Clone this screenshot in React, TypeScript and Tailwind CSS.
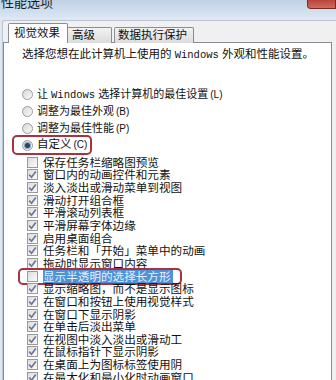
import React from "react";

const FONT = "font-['Liberation_Sans','Noto_Sans_CJK_SC',sans-serif]";

const radios = [
    { label: "让 ", mono: "Windows", rest: " 选择计算机的最佳设置", key: "(L)" },
    { label: "调整为最佳外观", key: "(B)" },
    { label: "调整为最佳性能", key: "(P)" },
];

const effects: { text: string; on: boolean; marked?: boolean }[] = [
    { text: "保存任务栏缩略图预览", on: false },
    { text: "窗口内的动画控件和元素", on: true },
    { text: "淡入淡出或滑动菜单到视图", on: true },
    { text: "滑动打开组合框", on: true },
    { text: "平滑滚动列表框", on: true },
    { text: "平滑屏幕字体边缘", on: true },
    { text: "启用桌面组合", on: true },
    { text: "任务栏和「开始」菜单中的动画", on: true },
    { text: "拖动时显示窗口内容", on: true },
    { text: "显示半透明的选择长方形", on: false, marked: true },
    { text: "显示缩略图，而不是显示图标", on: true },
    { text: "在窗口和按钮上使用视觉样式", on: true },
    { text: "在窗口下显示阴影", on: true },
    { text: "在单击后淡出菜单", on: true },
    { text: "在视图中淡入淡出或滑动工", on: true },
    { text: "在鼠标指针下显示阴影", on: true },
    { text: "在桌面上为图标标签使用阴", on: true },
    { text: "在最大化和最小化时动画窗口", on: true },
];

const Radio: React.FC<{ on?: boolean }> = ({ on }) => (
    <span className="w-[11px] h-[11px] rounded-full border border-[#9a9a9a] bg-gradient-to-br from-[#d8d8d8] to-[#fafafa] flex items-center justify-center shrink-0">
        {on && <span className="w-[5px] h-[5px] rounded-full bg-[#2e4466] ring-1 ring-[#8aa0c4]" />}
    </span>
);

const Check: React.FC<{ on: boolean }> = ({ on }) => (
    <span className="w-[11px] h-[11px] border border-[#9a9a9a] bg-gradient-to-br from-[#dcdcdc] to-[#fbfbfb] flex items-center justify-center shrink-0">
        {on && (
            <svg width="9" height="9" viewBox="0 0 9 9">
                <path d="M1.2 4.6 L3.5 7.2 L7.8 1.4" fill="none" stroke="#6f7596" strokeWidth="1.7" />
            </svg>
        )}
    </span>
);

export default function App() {
    return (
        <div className={`w-[336px] h-[380px] overflow-hidden bg-[#eaf0f7] relative text-[#111] ${FONT}`}>
            {/* title bar */}
            <div className="h-[17px] bg-gradient-to-b from-[#bfd1e5] to-[#d9e5f1] overflow-hidden">
                <div className="-mt-[5px] text-[13px] leading-[16px] text-[#1c1c1c] pl-[1px]">性能选项</div>
            </div>
            <div className="absolute top-0 right-0 w-[29px] h-[9px] rounded-bl-[4px] bg-gradient-to-b from-[#b7443a] to-[#d46a5c] border border-t-0 border-[#7a2a24]" />

            {/* dialog body */}
            <div className="h-[363px] pt-[3px] pl-[2px] bg-[#dfe8f2]">
                <div className="h-full border-l border-t border-[#b9c5d3] rounded-tl-[3px] bg-[#f0f0f0] pt-[2px]">
                    {/* tabs */}
                    <div className="flex items-end h-[20px] pl-[5px]">
                        <div className="w-[60px] h-[20px] bg-white border border-b-0 border-[#898c95] rounded-t-[2px] text-[11.5px] leading-[18px] pl-[5px] relative z-10">
                            视觉效果
                        </div>
                        <div className="w-[44px] h-[16px] bg-gradient-to-b from-[#f2f2f2] to-[#dcdcdc] border border-l-0 border-b-0 border-[#898c95] rounded-tr-[2px] text-[11.5px] leading-[15px] pl-[4px]">
                            高级
                        </div>
                        <div className="w-[80px] h-[16px] ml-[2px] bg-gradient-to-b from-[#f2f2f2] to-[#dcdcdc] border border-b-0 border-[#898c95] rounded-t-[2px] text-[11.5px] leading-[15px] pl-[3px]">
                            数据执行保护
                        </div>
                    </div>

                    {/* panel */}
                    <div className="w-[329px] h-[400px] -mt-px border border-[#898c95] bg-white">
                        <div className="pt-[4px] pl-[18px] text-[11.5px] leading-[14px] whitespace-nowrap">
                            选择您想在此计算机上使用的 <span className="font-['Liberation_Mono'] text-[10.5px]">Windows</span> 外观和性能设置。
                        </div>

                        <div className="mt-[24px]">
                            {radios.map((r) => (
                                <div key={r.key} className="h-[17px] flex items-center pl-[18px] text-[11px] whitespace-nowrap">
                                    <Radio />
                                    <span className="ml-[4px]">
                                        {r.label}
                                        {r.mono && <span className="font-['Liberation_Mono'] text-[10.5px]">{r.mono}</span>}
                                        {r.rest}
                                        <span className="text-[10px] ml-[2px]">{r.key}</span>
                                    </span>
                                </div>
                            ))}
                            <div className="-mt-[2px] ml-[8px] w-[80px] h-[20px] border-2 border-[#a8323f] rounded-[5px] flex items-center pl-[8px] text-[11.5px]">
                                <Radio on />
                                <span className="ml-[4px]">自定义<span className="text-[10px] ml-[2px]">(C)</span></span>
                            </div>
                        </div>

                        <div className="mt-[1px]">
                            {effects.map((e) => (
                                <div key={e.text} className="h-[12.65px] flex items-center pl-[23px] relative whitespace-nowrap">
                                    <Check on={e.on} />
                                    <span className={`ml-[5px] text-[11.6px] leading-[13px] ${e.marked ? "bg-[#4f93d6] text-[#e6f0fb] pr-[2px]" : ""}`}>
                                        {e.text}
                                    </span>
                                    {e.marked && (
                                        <span className="absolute left-[14px] w-[164px] -top-[2px] h-[17px] border-2 border-[#a8323f] rounded-[5px]" />
                                    )}
                                </div>
                            ))}
                        </div>
                    </div>
                </div>
            </div>
        </div>
    );
}
